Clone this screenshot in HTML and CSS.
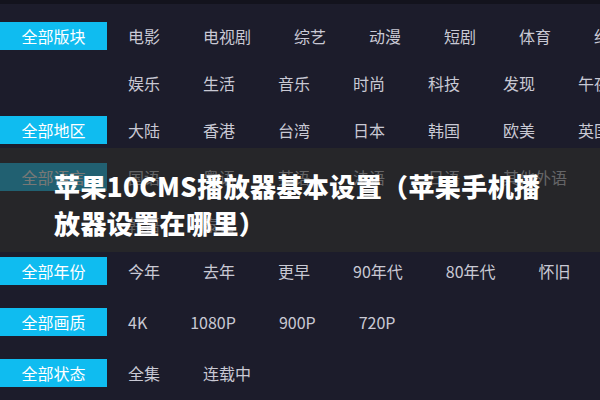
FILE: index.html
```html
<!DOCTYPE html>
<html lang="zh-CN">
<head>
<meta charset="utf-8">
<title>苹果10CMS播放器基本设置</title>
<link rel="stylesheet" href="styles.css">
</head>
<body>
<div class="viewport">
  <div class="topbar"></div>
  <div class="filters">
    <div class="row">
      <div class="label">全部版块</div>
      <ul class="items">
        <li>电影</li><li>电视剧</li><li>综艺</li><li>动漫</li><li>短剧</li><li>体育</li><li>纪录</li>
        <li>娱乐</li><li>生活</li><li>音乐</li><li>时尚</li><li>科技</li><li>发现</li><li>午夜</li>
      </ul>
    </div>
    <div class="row">
      <div class="label">全部地区</div>
      <ul class="items">
        <li>大陆</li><li>香港</li><li>台湾</li><li>日本</li><li>韩国</li><li>欧美</li><li>英国</li>
      </ul>
    </div>
    <div class="row">
      <div class="label">全部语言</div>
      <ul class="items">
        <li>国语</li><li>粤语</li><li>英语</li><li>法语</li><li>日语</li><li>其他外语</li>
        <li>韩语</li><li>泰语</li>
      </ul>
    </div>
    <div class="row">
      <div class="label">全部年份</div>
      <ul class="items">
        <li>今年</li><li>去年</li><li>更早</li><li>90年代</li><li>80年代</li><li>怀旧</li>
      </ul>
    </div>
    <div class="row row-wide">
      <div class="label">全部画质</div>
      <ul class="items">
        <li>4K</li><li>1080P</li><li>900P</li><li>720P</li>
      </ul>
    </div>
    <div class="row row-wide">
      <div class="label">全部状态</div>
      <ul class="items">
        <li>全集</li><li>连载中</li>
      </ul>
    </div>
  </div>
  <div class="banner">
    <h1 class="title">苹果10CMS播放器基本设置（苹果手机播放器设置在哪里）</h1>
  </div>
</div>
</body>
</html>
```

FILE: styles.css
```css
html, body {
  margin: 0;
  padding: 0;
  background: #1c1c2b;
  overflow: hidden;
}

.viewport {
  position: relative;
  width: 600px;
  height: 400px;
  overflow: hidden;
  background: #1c1c2b;
  font-family: "Noto Sans CJK SC", "Noto Sans", sans-serif;
}

.topbar {
  height: 4px;
  background: #13131d;
}

.filters {
  width: 720px;
  padding-top: 18px;
  display: flex;
  flex-direction: column;
  gap: 19px;
}

.row {
  display: flex;
  align-items: flex-start;
}

.row-wide {
  margin-top: 4px;
}

.label {
  flex: none;
  width: 107px;
  height: 28px;
  line-height: 28px;
  background: #0fbcf0;
  color: #ffffff;
  font-size: 16px;
  text-align: center;
}

.items {
  list-style: none;
  margin: 0 0 0 21px;
  padding: 0;
  width: 505px;
  display: flex;
  flex-wrap: wrap;
  column-gap: 43px;
  row-gap: 19px;
}

.items li {
  line-height: 28px;
  font-size: 16px;
  color: #c9c9d4;
  white-space: nowrap;
}

.banner {
  position: absolute;
  left: 0;
  right: 0;
  top: 148px;
  height: 104px;
  box-sizing: border-box;
  padding: 19px 0 0 54px;
  background: rgba(44, 44, 40, 0.64);
}

.title {
  margin: 0;
  max-width: 500px;
  font-size: 26px;
  line-height: 37px;
  font-weight: 900;
  letter-spacing: 0.4px;
  color: #ffffff;
}
```
